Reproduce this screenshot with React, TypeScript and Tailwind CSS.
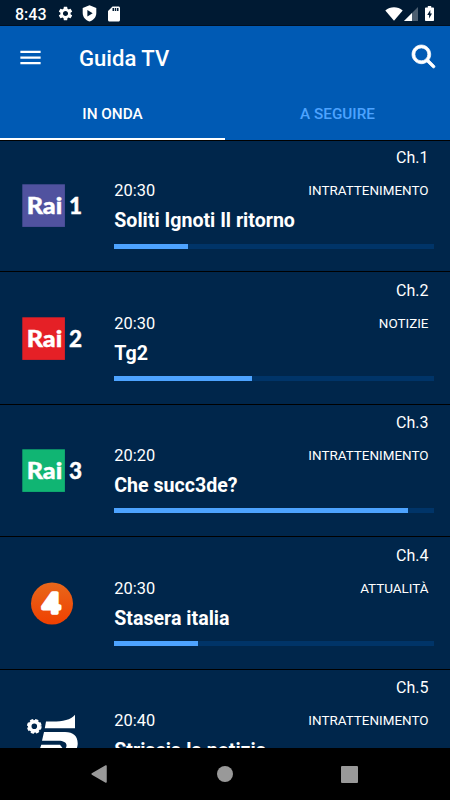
import { FaMagnifyingGlass } from 'react-icons/fa6'
import { MdMenu, MdSdCard, MdSettings } from 'react-icons/md'

interface Program {
  channel: number
  time: string
  title: string
  category: string
  progress: number
}

const programs: Program[] = [
  { channel: 1, time: '20:30', title: 'Soliti Ignoti Il ritorno', category: 'INTRATTENIMENTO', progress: 23.2 },
  { channel: 2, time: '20:30', title: 'Tg2', category: 'NOTIZIE', progress: 43 },
  { channel: 3, time: '20:20', title: 'Che succ3de?', category: 'INTRATTENIMENTO', progress: 92 },
  { channel: 4, time: '20:30', title: 'Stasera italia', category: 'ATTUALITÀ', progress: 26.1 },
  { channel: 5, time: '20:40', title: 'Striscia la notizia', category: 'INTRATTENIMENTO', progress: 20 },
]

function RaiLogo({ number, color }: { number: number; color: string }) {
  return (
    <svg width="64" height="44" viewBox="0 0 64 44" fill="#fff" fontFamily="Lato, sans-serif" fontWeight="900">
      <rect x="0.3" y="0.3" width="42.6" height="42.6" fill={color} />
      <g stroke="#fff" strokeWidth="0.4">
        <text x="4.7" y="29.9" fontSize="22.5" textLength="35.5" lengthAdjust="spacingAndGlyphs">Rai</text>
        <text x="53.5" y="29.7" fontSize="22.5" textAnchor="middle">{number}</text>
      </g>
    </svg>
  )
}

function Rete4Logo() {
  return (
    <svg width="64" height="44" viewBox="0 0 64 44">
      <defs>
        <linearGradient id="rete4" x1="0" y1="0" x2="0" y2="1">
          <stop offset="0" stopColor="#e8671b" />
          <stop offset="1" stopColor="#f04000" />
        </linearGradient>
      </defs>
      <circle cx="30" cy="21.5" r="21" fill="url(#rete4)" />
      <text
        x="20.3"
        y="31"
        fontSize="28"
        fontWeight="500"
        fontFamily="Roboto, sans-serif"
        textLength="18"
        lengthAdjust="spacingAndGlyphs"
        fill="#fff"
        stroke="#fff"
        strokeWidth="3.6"
        strokeLinejoin="round"
      >
        4
      </text>
    </svg>
  )
}

function Canale5Logo() {
  return (
    <svg width="64" height="44" viewBox="0 0 64 44" fill="#fff">
      <circle cx="12.3" cy="12.3" r="4.6" fill="none" stroke="#fff" strokeWidth="3.6" />
      <circle cx="12.3" cy="12.3" r="6.4" fill="none" stroke="#fff" strokeWidth="2" strokeDasharray="3.2 1.83" />
      <path d="M24 7.4C37 8.2 48 7 53 0.8V14.3H22.8Z" />
      <path d="M22 18H43C52 18 56.4 23 55.6 31C54.6 39 48 43 38 43H17L19 38H34C39 38 44 36 44.5 32C45 28.5 41 26.8 37 26.8H20Z" />
      <path d="M19.3 30.8H38L42 36H17.5Z" />
    </svg>
  )
}

function ChannelLogo({ channel }: { channel: number }) {
  if (channel === 1) return <RaiLogo number={1} color="#50529f" />
  if (channel === 2) return <RaiLogo number={2} color="#e52026" />
  if (channel === 3) return <RaiLogo number={3} color="#10b573" />
  if (channel === 4) return <Rete4Logo />
  return <Canale5Logo />
}

function StatusBar() {
  return (
    <div className="flex h-[26px] shrink-0 items-center justify-between border-b border-[#001022] bg-[#001a33] pt-[2px] pr-4 pl-[15px] text-white">
      <div className="flex items-center">
        <span className="mt-[2px] w-[42px] text-[16px] leading-[24px] font-medium">8:43</span>
        <MdSettings className="h-[17px] w-[17px]" />
        <svg className="ml-[7px]" width="17" height="17" viewBox="0 0 16 16">
          <path d="M8 0.3L14.4 2.8V7.6C14.4 11.4 11.8 14.4 8 15.6C4.2 14.4 1.6 11.4 1.6 7.6V2.8Z" fill="#fff" />
          <path d="M6 4.8L11 7.8L6 10.8Z" fill="#001a33" />
        </svg>
        <MdSdCard className="ml-[7px] h-[18px] w-[18px]" />
      </div>
      <div className="flex items-center">
        <svg width="18" height="14" viewBox="0 0 18 14">
          <path d="M0.3 3.4C5.4 -0.8 12.6 -0.8 17.7 3.4L9 13.7Z" fill="#fff" />
        </svg>
        <svg className="ml-px" width="14" height="14" viewBox="0 0 14 14">
          <path d="M14 0V14H0Z" fill="#4d5f71" />
          <path d="M8 6V14H0Z" fill="#fff" />
        </svg>
        <svg className="ml-[7px]" width="9" height="15" viewBox="0 0 9 15">
          <path d="M2.8 0H6.2V1.5H8.2Q9 1.5 9 2.3V14.2Q9 15 8.2 15H0.8Q0 15 0 14.2V2.3Q0 1.5 0.8 1.5H2.8Z" fill="#fff" />
          <path d="M5.3 4L2.2 9H4.1V12.6L7 7.6H5.3Z" fill="#001a33" />
        </svg>
      </div>
    </div>
  )
}

function Header() {
  return (
    <header className="h-[114px] shrink-0 bg-[#005ab4] text-white">
      <div className="flex h-[62px] items-center pr-[15px] pl-[17px]">
        <MdMenu className="h-[27px] w-[27px]" />
        <h1 className="mt-px ml-[35px] flex-1 text-[22.1px] leading-[26px] font-medium">Guida TV</h1>
        <FaMagnifyingGlass className="mb-px h-[23px] w-[23px] overflow-visible stroke-white" strokeWidth={16} />
      </div>
      <div className="grid h-[52px] grid-cols-2 text-center text-[15.3px] leading-[50px] font-medium">
        <div className="h-[52px] border-b-2 border-white pt-px">IN ONDA</div>
        <div className="pt-px text-[#4da3ff]">A SEGUIRE</div>
      </div>
    </header>
  )
}

function ProgramRow({ program }: { program: Program }) {
  return (
    <div className="flex h-[132.4px] shrink-0 border-b border-black text-white">
      <div className="w-[114.3px] shrink-0 pt-[44.35px] pl-[22px]">
        <ChannelLogo channel={program.channel} />
      </div>
      <div className="flex-1 pr-4">
        <div className="pt-[8.35px] pr-[5.5px] text-right text-[16px] leading-[19px]">Ch.{program.channel}</div>
        <div className="mt-[14px] flex h-[19px] items-start justify-between pr-[5.5px]">
          <span className="text-[16.4px] leading-[19px]">{program.time}</span>
          <span className="text-[13.45px] leading-[20px]">{program.category}</span>
        </div>
        <div className="mt-[9px] text-[19.6px] leading-[24px] font-bold whitespace-nowrap">{program.title}</div>
        <div className="mt-[10.3px] h-[5px] bg-[#003468]">
          <div className="h-full bg-[#4da3ff]" style={{ width: `${program.progress}%` }} />
        </div>
      </div>
    </div>
  )
}

function NavigationBar() {
  return (
    <div className="flex h-[52px] shrink-0 items-center justify-between bg-black pr-[92px] pl-[91px]">
      <svg width="17" height="18" viewBox="0 0 17 18">
        <path d="M15 1V17L1.2 9Z" fill="#999" stroke="#999" strokeWidth="1.5" strokeLinejoin="round" />
      </svg>
      <div className="h-4 w-4 rounded-full bg-[#999]" />
      <div className="h-[17px] w-[17px] rounded-[1px] bg-[#999]" />
    </div>
  )
}

export default function App() {
  return (
    <div className="flex h-[800px] w-[450px] flex-col overflow-hidden bg-[#00264b] font-[Roboto,sans-serif]">
      <StatusBar />
      <Header />
      <main className="flex min-h-0 flex-1 flex-col overflow-hidden shadow-[inset_0_1px_0_#000]">
        {programs.map((program) => (
          <ProgramRow key={program.channel} program={program} />
        ))}
      </main>
      <NavigationBar />
    </div>
  )
}
